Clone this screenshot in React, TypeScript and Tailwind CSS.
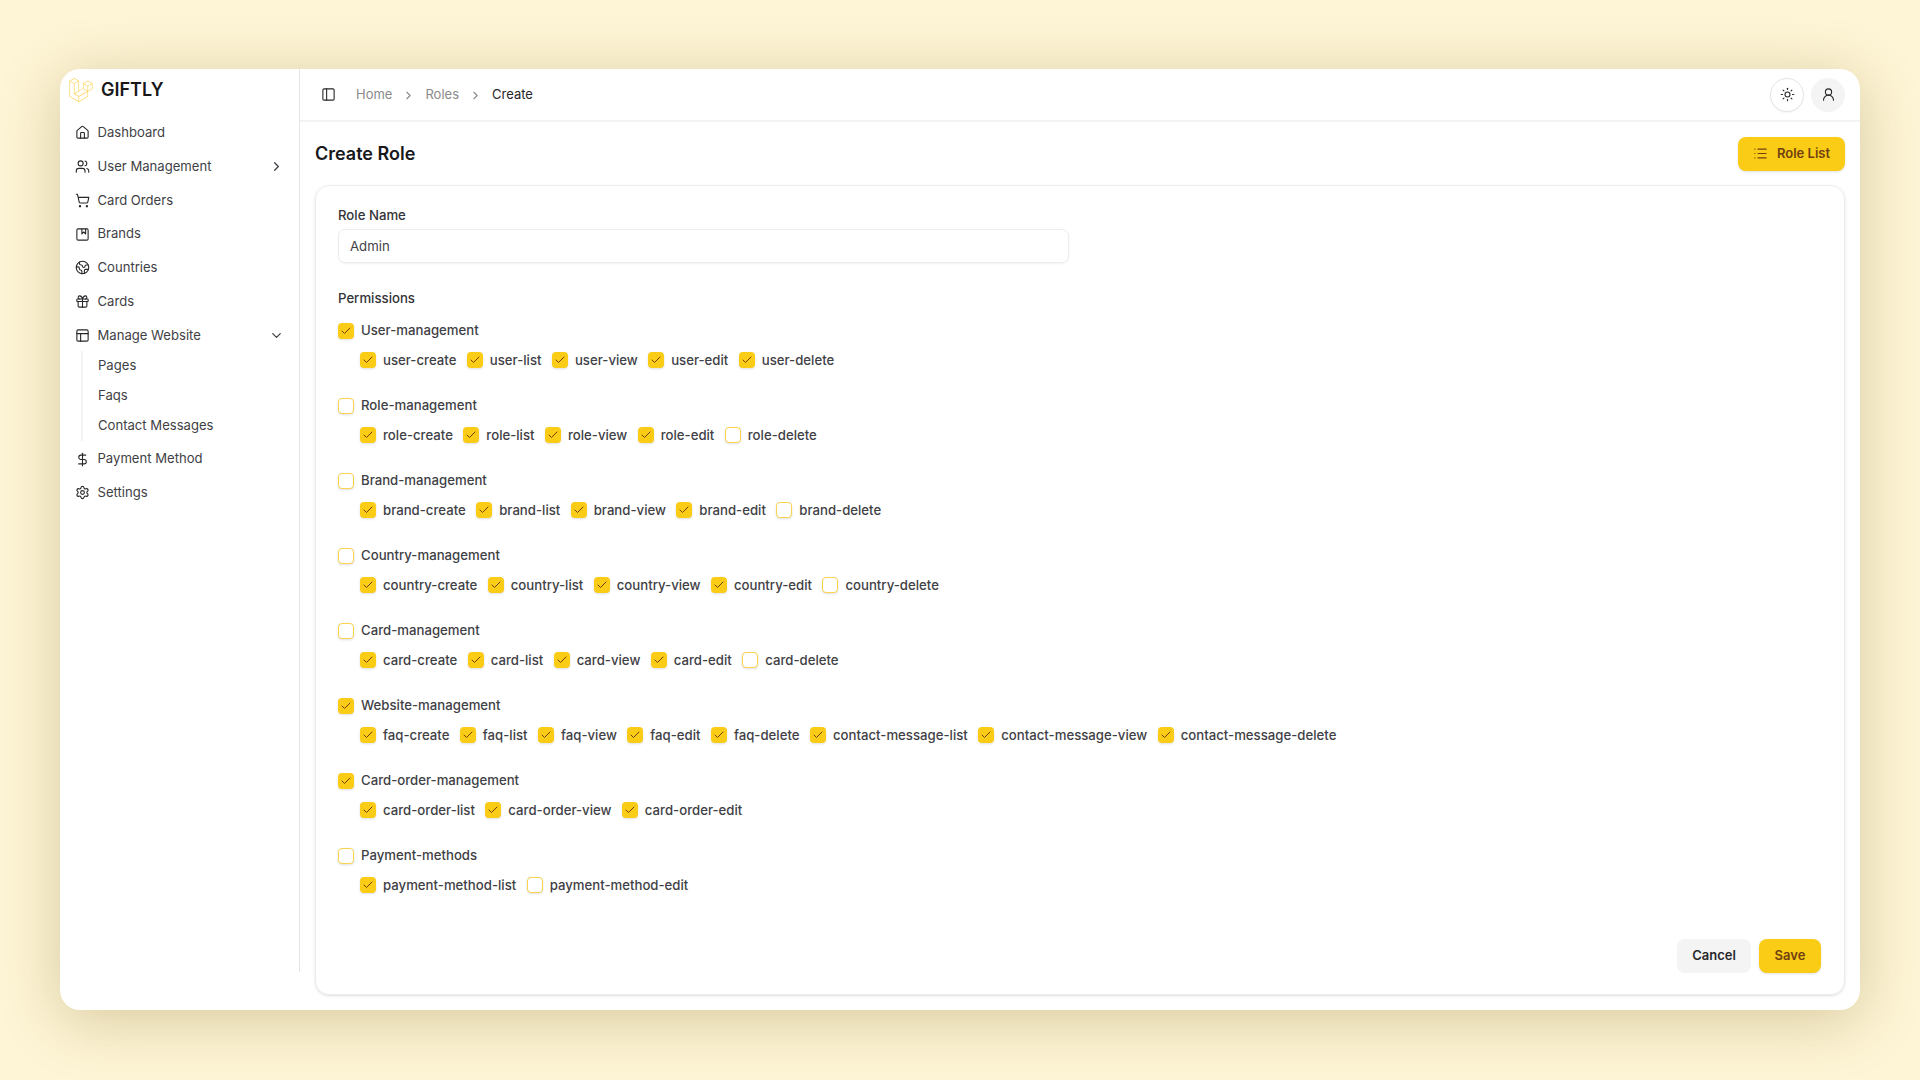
import {
  Album,
  Check,
  ChevronDown,
  ChevronRight,
  DollarSign,
  Earth,
  Gift,
  House,
  List,
  PanelLeft,
  PanelsTopLeft,
  Settings,
  ShoppingCart,
  Sun,
  UserRound,
  Users,
} from "lucide-react";
import { SiLaravel } from "react-icons/si";

const groups: { name: string; on: boolean; items: [string, boolean][] }[] = [
  {
    name: "User-management",
    on: true,
    items: [
      ["user-create", true],
      ["user-list", true],
      ["user-view", true],
      ["user-edit", true],
      ["user-delete", true],
    ],
  },
  {
    name: "Role-management",
    on: false,
    items: [
      ["role-create", true],
      ["role-list", true],
      ["role-view", true],
      ["role-edit", true],
      ["role-delete", false],
    ],
  },
  {
    name: "Brand-management",
    on: false,
    items: [
      ["brand-create", true],
      ["brand-list", true],
      ["brand-view", true],
      ["brand-edit", true],
      ["brand-delete", false],
    ],
  },
  {
    name: "Country-management",
    on: false,
    items: [
      ["country-create", true],
      ["country-list", true],
      ["country-view", true],
      ["country-edit", true],
      ["country-delete", false],
    ],
  },
  {
    name: "Card-management",
    on: false,
    items: [
      ["card-create", true],
      ["card-list", true],
      ["card-view", true],
      ["card-edit", true],
      ["card-delete", false],
    ],
  },
  {
    name: "Website-management",
    on: true,
    items: [
      ["faq-create", true],
      ["faq-list", true],
      ["faq-view", true],
      ["faq-edit", true],
      ["faq-delete", true],
      ["contact-message-list", true],
      ["contact-message-view", true],
      ["contact-message-delete", true],
    ],
  },
  {
    name: "Card-order-management",
    on: true,
    items: [
      ["card-order-list", true],
      ["card-order-view", true],
      ["card-order-edit", true],
    ],
  },
  {
    name: "Payment-methods",
    on: false,
    items: [
      ["payment-method-list", true],
      ["payment-method-edit", false],
    ],
  },
];

function Box({ on }: { on: boolean }) {
  return (
    <span
      className={
        on
          ? "flex size-4 shrink-0 items-center justify-center rounded-[4px] bg-[#facc15] text-[#713f12] shadow-sm"
          : "flex size-4 shrink-0 items-center justify-center rounded-[4px] border border-[#fbd24e] bg-white shadow-sm"
      }
    >
      {on && <Check size={12} strokeWidth={2} />}
    </span>
  );
}

function NavRow({
  icon: Icon,
  label,
  chevron,
}: {
  icon: typeof House;
  label: string;
  chevron?: "right" | "down";
}) {
  return (
    <div className="flex h-[33.75px] items-center gap-[7.5px] pl-[15px] pr-[15px] text-[13.1px] text-[#3f3f46]">
      <Icon size={15} strokeWidth={1.75} className="shrink-0 text-[#27272a]" />
      <span className="flex-1">{label}</span>
      {chevron === "right" && <ChevronRight size={15} strokeWidth={2} className="text-[#3f3f46]" />}
      {chevron === "down" && <ChevronDown size={15} strokeWidth={2} className="text-[#3f3f46]" />}
    </div>
  );
}

export default function App() {
  return (
    <div className="h-[1080px] w-[1920px] overflow-hidden bg-[#fef5d6] pl-[60px] pt-[69px] font-['Inter',sans-serif]">
      <div className="flex h-[941px] w-[1800px] rounded-[20px] bg-white shadow-[0_10px_60px_rgba(110,90,10,0.28)]">
        <aside className="h-[903px] w-[240px] shrink-0 border-r border-[#e5e5e5]">
          <div className="flex h-[42px] items-center gap-[8px] pl-[9px]">
            <SiLaravel size={24} className="text-[#fbd769]" />
            <span className="text-[18px] font-semibold leading-none text-[#18181b]">GIFTLY</span>
          </div>
          <nav className="pt-[5px]">
            <NavRow icon={House} label="Dashboard" />
            <NavRow icon={Users} label="User Management" chevron="right" />
            <NavRow icon={ShoppingCart} label="Card Orders" />
            <NavRow icon={Album} label="Brands" />
            <NavRow icon={Earth} label="Countries" />
            <NavRow icon={Gift} label="Cards" />
            <NavRow icon={PanelsTopLeft} label="Manage Website" chevron="down" />
            <div className="mb-[1px] ml-[21px] -mt-[1px] border-l-2 border-[#f3f3f3] pl-[15px] text-[13.1px] text-[#3f3f46]">
              <div className="flex h-[30px] items-center">Pages</div>
              <div className="flex h-[30px] items-center">Faqs</div>
              <div className="flex h-[30px] items-center">Contact Messages</div>
            </div>
            <NavRow icon={DollarSign} label="Payment Method" />
            <NavRow icon={Settings} label="Settings" />
          </nav>
        </aside>

        <div className="flex min-w-0 flex-1 flex-col">
          <header className="flex h-[53px] shrink-0 items-center border-b-2 border-[#f3f3f3] pl-[21px] pr-[15px]">
            <PanelLeft size={15} strokeWidth={1.75} className="text-[#27272a]" />
            <div className="ml-[20px] flex items-center pt-[1px] text-[13px] text-[#8a8a8a]">
              <span>Home</span>
              <ChevronRight size={13} className="mx-[10px]" />
              <span>Roles</span>
              <ChevronRight size={13} className="mx-[10px]" />
              <span className="text-[#27272a]">Create</span>
            </div>
            <div className="ml-auto flex items-center gap-[7px]">
              <div className="flex size-[34px] items-center justify-center rounded-full border border-[#e5e5e5] bg-white shadow-xs">
                <Sun size={15} strokeWidth={1.75} className="text-[#27272a]" />
              </div>
              <div className="flex size-[34px] items-center justify-center rounded-full bg-[#f4f4f4]">
                <UserRound size={15} strokeWidth={1.75} className="text-[#27272a]" />
              </div>
            </div>
          </header>

          <main className="flex min-h-0 flex-1 flex-col pb-[15px] pl-[15px] pr-[15px]">
            <div className="flex h-[63px] shrink-0 items-center justify-between">
              <h1 className="text-[18px] font-semibold text-[#18181b]">Create Role</h1>
              <button className="flex h-[34px] w-[107px] items-center justify-center gap-[9px] rounded-[8px] bg-[#facc15] text-[13px] font-semibold text-[#713f12] shadow-sm">
                <List size={15} strokeWidth={1.75} />
                Role List
              </button>
            </div>

            <section className="flex min-h-0 flex-1 flex-col rounded-[14px] border border-[#ececec] pb-[21.5px] pl-[22px] pr-[23px] pt-[19px] shadow-sm">
              <label className="block text-[13.2px] font-medium leading-[20px] text-[#333338]">Role Name</label>
              <div className="mt-[4px] flex h-[34px] w-[731px] shrink-0 items-center rounded-[7px] border border-[#ececec] pl-[11px] pt-[2px] text-[13.2px] text-[#3f3f46] shadow-xs">
                Admin
              </div>
              <div className="mt-[24.5px] text-[13.2px] font-medium leading-[20px] text-[#333338]">Permissions</div>

              <div className="mt-[13px] flex flex-col gap-[25px]">
                {groups.map((g) => (
                  <div key={g.name} className="flex flex-col gap-[10px]">
                    <div className="flex h-5 items-center gap-[7px] text-[13.2px] font-medium text-[#3f3f46]">
                      <Box on={g.on} />
                      {g.name}
                    </div>
                    <div className="ml-[22px] flex h-5 items-center gap-[10.4px]">
                      {g.items.map(([name, on]) => (
                        <div key={name} className="flex items-center gap-[7px] text-[13.2px] font-medium text-[#3f3f46]">
                          <Box on={on} />
                          {name}
                        </div>
                      ))}
                    </div>
                  </div>
                ))}
              </div>

              <div className="mt-auto flex justify-end gap-[8px]">
                <button className="flex h-[34px] w-[74px] items-center justify-center rounded-[8px] bg-[#f4f4f4] text-[13px] font-semibold text-[#27272a]">
                  Cancel
                </button>
                <button className="flex h-[34px] w-[62px] items-center justify-center rounded-[8px] bg-[#facc15] text-[13px] font-semibold text-[#713f12] shadow-sm">
                  Save
                </button>
              </div>
            </section>
          </main>
        </div>
      </div>
    </div>
  );
}
